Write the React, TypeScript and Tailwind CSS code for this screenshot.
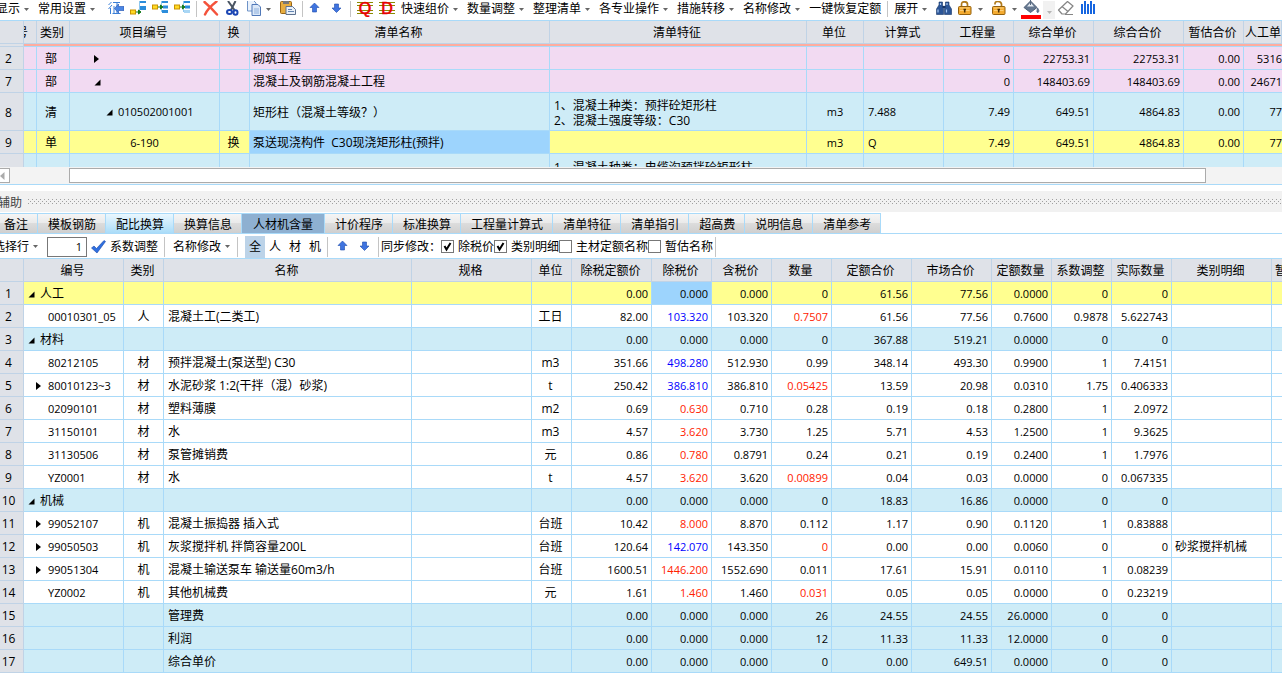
import { useState, type ReactNode } from 'react'

interface BillRow {
  no: string
  kind: string
  tree?: 'open' | 'closed'
  code?: string
  swap?: string
  name?: string
  feature?: string
  unit?: string
  formula?: string
  qty?: string
  price?: string
  total?: string
  estimate?: string
  labour?: string
  tone: 'pink' | 'cyan' | 'yellow'
}

interface ResourceRow {
  tree?: 'open' | 'closed'
  group?: string
  code?: string
  kind?: string
  name?: string
  unit?: string
  values: string[]
  priceColor?: 'blue' | 'red'
  qtyRed?: boolean
  detail?: string
  tone: 'white' | 'cyan' | 'yellow'
}

const tones: Record<string, string> = {
  pink: 'bg-[#f2daf2]',
  cyan: 'bg-[#ceecf7]',
  yellow: 'bg-[#ffff90]',
  white: 'bg-white',
}

const billRows: BillRow[] = [
  { no: '2', kind: '部', tree: 'closed', name: '砌筑工程', qty: '0', price: '22753.31', total: '22753.31', estimate: '0.00', labour: '5316', tone: 'pink' },
  { no: '7', kind: '部', tree: 'open', name: '混凝土及钢筋混凝土工程', qty: '0', price: '148403.69', total: '148403.69', estimate: '0.00', labour: '24671', tone: 'pink' },
  { no: '8', kind: '清', tree: 'open', code: '010502001001', name: '矩形柱（混凝土等级？）', feature: '1、混凝土种类：预拌砼矩形柱\n2、混凝土强度等级：C30', unit: 'm3', formula: '7.488', qty: '7.49', price: '649.51', total: '4864.83', estimate: '0.00', labour: '77', tone: 'cyan' },
  { no: '9', kind: '单', code: '6-190', swap: '换', name: '泵送现浇构件  C30现浇矩形柱(预拌)', unit: 'm3', formula: 'Q', qty: '7.49', price: '649.51', total: '4864.83', estimate: '0.00', labour: '77', tone: 'yellow' },
]

const billHeads = ['类别', '项目编号', '换', '清单名称', '清单特征', '单位', '计算式', '工程量', '综合单价', '综合合价', '暂估合价']

// values: 除税定额价, 除税价, 含税价, 数量, 定额合价, 市场合价, 定额数量, 系数调整, 实际数量
const resourceRows: ResourceRow[] = [
  { tree: 'open', group: '人工', values: ['0.00', '0.000', '0.000', '0', '61.56', '77.56', '0.0000', '0', '0'], tone: 'yellow' },
  { code: '00010301_05', kind: '人', name: '混凝土工(二类工)', unit: '工日', values: ['82.00', '103.320', '103.320', '0.7507', '61.56', '77.56', '0.7600', '0.9878', '5.622743'], priceColor: 'blue', qtyRed: true, tone: 'white' },
  { tree: 'open', group: '材料', values: ['0.00', '0.000', '0.000', '0', '367.88', '519.21', '0.0000', '0', '0'], tone: 'cyan' },
  { code: '80212105', kind: '材', name: '预拌混凝土(泵送型) C30', unit: 'm3', values: ['351.66', '498.280', '512.930', '0.99', '348.14', '493.30', '0.9900', '1', '7.4151'], priceColor: 'blue', tone: 'white' },
  { tree: 'closed', code: '80010123~3', kind: '材', name: '水泥砂浆 1:2(干拌（混）砂浆)', unit: 't', values: ['250.42', '386.810', '386.810', '0.05425', '13.59', '20.98', '0.0310', '1.75', '0.406333'], priceColor: 'blue', qtyRed: true, tone: 'white' },
  { code: '02090101', kind: '材', name: '塑料薄膜', unit: 'm2', values: ['0.69', '0.630', '0.710', '0.28', '0.19', '0.18', '0.2800', '1', '2.0972'], priceColor: 'red', tone: 'white' },
  { code: '31150101', kind: '材', name: '水', unit: 'm3', values: ['4.57', '3.620', '3.730', '1.25', '5.71', '4.53', '1.2500', '1', '9.3625'], priceColor: 'red', tone: 'white' },
  { code: '31130506', kind: '材', name: '泵管摊销费', unit: '元', values: ['0.86', '0.780', '0.8791', '0.24', '0.21', '0.19', '0.2400', '1', '1.7976'], priceColor: 'red', tone: 'white' },
  { code: 'YZ0001', kind: '材', name: '水', unit: 't', values: ['4.57', '3.620', '3.620', '0.00899', '0.04', '0.03', '0.0000', '0', '0.067335'], priceColor: 'red', qtyRed: true, tone: 'white' },
  { tree: 'open', group: '机械', values: ['0.00', '0.000', '0.000', '0', '18.83', '16.86', '0.0000', '0', '0'], tone: 'cyan' },
  { tree: 'closed', code: '99052107', kind: '机', name: '混凝土振捣器 插入式', unit: '台班', values: ['10.42', '8.000', '8.870', '0.112', '1.17', '0.90', '0.1120', '1', '0.83888'], priceColor: 'red', tone: 'white' },
  { tree: 'closed', code: '99050503', kind: '机', name: '灰浆搅拌机 拌筒容量200L', unit: '台班', values: ['120.64', '142.070', '143.350', '0', '0.00', '0.00', '0.0060', '0', '0'], priceColor: 'blue', qtyRed: true, detail: '砂浆搅拌机械', tone: 'white' },
  { tree: 'closed', code: '99051304', kind: '机', name: '混凝土输送泵车 输送量60m3/h', unit: '台班', values: ['1600.51', '1446.200', '1552.690', '0.011', '17.61', '15.91', '0.0110', '1', '0.08239'], priceColor: 'red', tone: 'white' },
  { code: 'YZ0002', kind: '机', name: '其他机械费', unit: '元', values: ['1.61', '1.460', '1.460', '0.031', '0.05', '0.05', '0.0000', '0', '0.23219'], priceColor: 'red', qtyRed: true, tone: 'white' },
  { name: '管理费', values: ['0.00', '0.000', '0.000', '26', '24.55', '24.55', '26.0000', '0', '0'], tone: 'cyan' },
  { name: '利润', values: ['0.00', '0.000', '0.000', '12', '11.33', '11.33', '12.0000', '0', '0'], tone: 'cyan' },
  { name: '综合单价', values: ['0.00', '0.000', '0.000', '0', '0.00', '649.51', '0.0000', '0', '0'], tone: 'cyan' },
]

const resourceHeads = ['编号', '类别', '名称', '规格', '单位', '除税定额价', '除税价', '含税价', '数量', '定额合价', '市场合价', '定额数量', '系数调整', '实际数量', '类别明细']

const tabs = ['备注', '模板钢筋', '配比换算', '换算信息', '人材机含量', '计价程序', '标准换算', '工程量计算式', '清单特征', '清单指引', '超高费', '说明信息', '清单参考']

function Caret({ light = false }: { light?: boolean }) {
  return (
    <svg width="5" height="3" viewBox="0 0 5 3" className="shrink-0">
      <path d="M0 0h5L2.5 3z" fill={light ? '#b5b5b5' : '#666'} />
    </svg>
  )
}

function Sep({ tall = false }: { tall?: boolean }) {
  return <span className={`block w-px shrink-0 bg-[#c4c4c4] ${tall ? 'h-5' : 'h-4'}`} />
}

function MenuButton({ label, children }: { label?: string; children: ReactNode }) {
  return (
    <button aria-label={label} className="flex shrink-0 items-center gap-1 whitespace-nowrap pr-[3px]">
      {children}
      <Caret />
    </button>
  )
}

function IconButton({ label, children }: { label: string; children: ReactNode }) {
  return (
    <button aria-label={label} className="flex h-4 shrink-0 items-center">
      {children}
    </button>
  )
}

function TreeMark({ state }: { state: 'open' | 'closed' }) {
  return state === 'open' ? (
    <svg width="7" height="7" viewBox="0 0 7 7" className="shrink-0">
      <path d="M6.5 0.5v6h-6z" fill="#000" />
    </svg>
  ) : (
    <svg width="5" height="8" viewBox="0 0 5 8" className="shrink-0">
      <path d="M0 0l5 4-5 4z" fill="#000" />
    </svg>
  )
}

function LocateIcon() {
  return (
    <svg width="16" height="16" viewBox="0 0 16 16">
      <path d="M3.500 1L0.500 4M4 4L0.500 8M2.500 7v6M5 1.500h7M9 1.500V12M6 5v7M4.500 12.500h8" fill="none" stroke="#3b7fd6" />
      <path d="M6.500 7.500L10.500 3v2.500H16v4h-5.500V12z" fill="#4a86e4" stroke="#1c4fae" strokeWidth="0.600" />
    </svg>
  )
}

// yellow source box with an arrow into one slot of the stacked blue list
function InsertIcon({ at }: { at: 'bottom' | 'middle' | 'top' }) {
  const y = at === 'bottom' ? 10 : 5
  return (
    <svg width="16" height="16" viewBox="0 0 16 16">
      <path d="M9.500 0v11" stroke="#8cc7ef" />
      <rect x="10" y="0" width="6" height="2" fill="#2c8ddb" />
      {at === 'bottom' && <rect x="10" y="5" width="6" height="4" fill="#2c8ddb" />}
      {at === 'middle' && <path d="M11 4.500h5v3h-5zM10 9h6v3h-6z" fill="#2c8ddb" />}
      {at === 'top' && <path d="M11 4.500h5v3h-5z" fill="#2c8ddb" />}
      {at === 'top' && <path d="M10 9h6v3h-6z" fill="#a9d6f4" />}
      <rect x="0.500" y={y - 1} width="5" height="4" fill="#ffd923" stroke="#c99400" />
      <path d={`M6 ${y + 1}h4M8.500 ${y - 1}l2.500 2-2.500 2z`} fill="#157a1c" stroke="#157a1c" />
    </svg>
  )
}

function DeleteIcon() {
  return (
    <svg width="16" height="16" viewBox="0 0 16 16">
      <path d="M1.500 1C5 4 11 10 14 13.500M13.500 0.500C9 4 4 9 2 13.500" fill="none" stroke="#f4523b" strokeWidth="2.400" strokeLinecap="round" />
    </svg>
  )
}

function CutIcon() {
  return (
    <svg width="16" height="16" viewBox="0 0 16 16">
      <path d="M3 0l6.500 9M10.500 0L6 9" stroke="#4a5563" strokeWidth="2" />
      <ellipse cx="4.500" cy="11" rx="2.500" ry="2" fill="none" stroke="#1b46b4" strokeWidth="2" />
      <ellipse cx="10.500" cy="11.500" rx="2" ry="2.300" fill="none" stroke="#1b46b4" strokeWidth="2" />
    </svg>
  )
}

function CopyIcon() {
  return (
    <svg width="15" height="16" viewBox="0 0 15 16">
      <path d="M0.500-0.500h6l2.500 2.500v8h-8.500z" fill="#eaf2fc" stroke="#6e93c8" />
      <path d="M5 3.500h6l2.500 2.500v8.500H5z" fill="#dbe8f8" stroke="#5078b8" />
      <path d="M7 8h5M7 10h5M7 12h5" stroke="#8fb0dc" />
    </svg>
  )
}

function PasteIcon() {
  return (
    <svg width="16" height="16" viewBox="0 0 16 16">
      <rect x="0.500" y="0.500" width="11" height="12" rx="1" fill="#e8ad3e" stroke="#986415" />
      <rect x="3" y="0" width="6" height="3" fill="#777" />
      <path d="M6 5.500h6.500l3 3V13.500H6z" fill="#e9f0f8" stroke="#5f7290" />
      <path d="M8 8.500h4M8 10.500h6" stroke="#6485b2" />
    </svg>
  )
}

function ArrowIcon({ down = false, width = 16 }: { down?: boolean; width?: number }) {
  return (
    <svg width={width} height="16" viewBox={`0 0 ${width} 16`}>
      <path
        d={down ? 'M3.500 3h4v4h2.500L5.500 11.500 1 7h2.500z' : 'M5.500 2L10 6.500H7.500v4.500h-4V6.500H1z'}
        fill="#3f74e0"
        stroke="#1d4cab"
        strokeWidth="0.600"
      />
    </svg>
  )
}

function LetterIcon({ letter }: { letter: string }) {
  return (
    <svg width="16" height="16" viewBox="0 0 16 16">
      <path d="M0 1.500h16M0 4.500h16M0 9.500h16M0 12.500h16" stroke="#8a8a00" />
      <text x="8" y="13" textAnchor="middle" fontSize="16" fill="#e80000" stroke="#e80000" strokeWidth="0.600" className="font-['Liberation_Sans',sans-serif]">
        {letter}
      </text>
    </svg>
  )
}

function BinocularsIcon() {
  return (
    <svg width="16" height="16" viewBox="0 0 16 16">
      <path d="M3 1h3.500v3l1 2v7.500H0.500V8L3 4zM13 1H9.500v3l-1 2v7.500h7V8L13 4z" fill="#2b5597" stroke="#173566" strokeWidth="0.600" />
      <path d="M2 8.500v3M10.500 8.500v3M4.500 2v2M11 2v2" stroke="#a8c8f2" strokeWidth="1.200" />
      <path d="M6.500 6h3" stroke="#173566" strokeWidth="2" />
    </svg>
  )
}

function LockIcon({ open = false }: { open?: boolean }) {
  return (
    <svg width="16" height="16" viewBox="0 0 16 16">
      <path d={open ? 'M3 3.500V2.500Q3 0.500 6 0.500T9.500 3v3' : 'M3.500 6V3.500Q3.500 0.800 6.500 0.800T9.500 3.500V6'} fill="none" stroke="#b07a1c" strokeWidth="1.700" />
      <rect x="0.500" y="5.500" width="12.500" height="8" rx="1" fill="#f4ab30" stroke="#94600d" />
      <path d="M2 7h9.500M2 9.500h9.500" stroke="#ffd88a" strokeWidth="0.800" />
      <path d="M5.500 8.500h2.500M6.700 8v3.500" stroke="#4b2f04" strokeWidth="1.500" />
    </svg>
  )
}

function FillIcon() {
  return (
    <svg width="20" height="20" viewBox="0 0 20 20">
      <path d="M9.500 1L16 7.500 9.500 12.500 3 7.500z" fill="#64778f" stroke="#506179" />
      <path d="M9.500 2.500L13 6.500H6z" fill="#e6ecf3" />
      <path d="M9.500 0v5" stroke="#57687f" />
      <path d="M16.500 8c1.500 2 1.500 3 1 4s-2 0.500-1.500-1z" fill="#5d7089" stroke="#5d7089" />
      <rect x="0" y="15" width="20" height="4" fill="#f00" />
    </svg>
  )
}

function EraserIcon() {
  return (
    <svg width="18" height="16" viewBox="0 0 18 16">
      <path d="M1.500 9L10.500 0.500l5.500 4.500L8.500 13H5z" fill="#fff" stroke="#858585" strokeWidth="1.200" strokeLinejoin="round" />
      <path d="M5 5.500l6 5M8 13.500h8" stroke="#858585" strokeWidth="1.200" />
    </svg>
  )
}

function BarsIcon() {
  return (
    <svg width="15" height="16" viewBox="0 0 15 16">
      <path d="M1 3v10M4 0v13M7 3v10M10 0v13M13 3v10" stroke="#1565e0" strokeWidth="2" />
    </svg>
  )
}

function MainToolbar() {
  return (
    <div className="flex h-5 items-center gap-1.5 overflow-hidden bg-white pb-[2px] leading-4">
      <div className="-ml-1 mr-1 flex items-center gap-1.5">
        <MenuButton>显示</MenuButton>
        <MenuButton>常用设置</MenuButton>
      </div>
      <IconButton label="定位"><LocateIcon /></IconButton>
      <IconButton label="插入末行"><InsertIcon at="bottom" /></IconButton>
      <IconButton label="插入中间"><InsertIcon at="middle" /></IconButton>
      <IconButton label="插入首行"><InsertIcon at="top" /></IconButton>
      <Sep />
      <IconButton label="删除"><DeleteIcon /></IconButton>
      <IconButton label="剪切"><CutIcon /></IconButton>
      <MenuButton label="复制"><CopyIcon /></MenuButton>
      <IconButton label="粘贴"><PasteIcon /></IconButton>
      <Sep />
      <IconButton label="上移"><ArrowIcon /></IconButton>
      <IconButton label="下移"><ArrowIcon down width={13} /></IconButton>
      <Sep />
      <IconButton label="清单"><LetterIcon letter="Q" /></IconButton>
      <IconButton label="定额"><LetterIcon letter="D" /></IconButton>
      <MenuButton>快速组价</MenuButton>
      <MenuButton>数量调整</MenuButton>
      <MenuButton>整理清单</MenuButton>
      <MenuButton>各专业操作</MenuButton>
      <MenuButton>措施转移</MenuButton>
      <MenuButton>名称修改</MenuButton>
      <button className="shrink-0 whitespace-nowrap">一键恢复定额</button>
      <Sep />
      <MenuButton>展开</MenuButton>
      <IconButton label="查找"><BinocularsIcon /></IconButton>
      <MenuButton label="锁定"><LockIcon /></MenuButton>
      <button aria-label="解锁" className="flex shrink-0 items-center gap-1"><LockIcon open /><Caret /></button>
      <div className="-ml-[2px] flex shrink-0 items-center gap-0.5 self-start">
        <button aria-label="填充颜色"><FillIcon /></button>
        <button aria-label="选择颜色" className="flex h-[18px] w-3 items-center justify-center bg-[#f1f1f1] pt-1"><Caret light /></button>
      </div>
      <div className="-ml-1 flex shrink-0 items-center gap-1.5">
        <IconButton label="清除格式"><EraserIcon /></IconButton>
        <IconButton label="图表"><BarsIcon /></IconButton>
      </div>
    </div>
  )
}

const head = 'border-r border-b border-[#c0d3e6] bg-[#dfe2e8] p-0 pt-[2px] font-normal overflow-hidden whitespace-nowrap'
const cell = 'border-r border-b border-[#a9daf9] p-0 pt-[2px] overflow-hidden whitespace-pre'
const num = 'pr-[3px] text-right text-[11px]'

function BillTable() {
  return (
    <div className="h-[147px] overflow-hidden border-t border-[#a9daf9]">
      <table className="w-full table-fixed border-separate border-spacing-0">
        <colgroup>
          <col className="w-6" />
          <col className="w-[13px]" />
          <col className="w-[33px]" />
          <col className="w-[150px]" />
          <col className="w-[30px]" />
          <col className="w-[300px]" />
          <col className="w-[257px]" />
          <col className="w-[57px]" />
          <col className="w-[80px]" />
          <col className="w-[70px]" />
          <col className="w-[80px]" />
          <col className="w-[90px]" />
          <col className="w-[60px]" />
          <col />
        </colgroup>
        <thead>
          <tr className="h-[23px]">
            <th className={head} />
            <th className={head}><span className="-ml-2 block w-3">号</span></th>
            {billHeads.map((h) => <th key={h} className={`${head} pr-[2px]`}>{h}</th>)}
            <th className={`${head} text-right`}>人工单</th>
          </tr>
          <tr className="h-[3px]">
            <td className="border-r border-b border-[#c0d3e6] bg-[#dfe2e8] p-0" />
            <td colSpan={13} className="border-b border-[#a9daf9] bg-[#ffac9f] p-0" />
          </tr>
        </thead>
        <tbody>
          {billRows.map((r) => (
            <tr key={r.no} className={`${r.feature ? 'h-[38px]' : 'h-[23px]'} ${tones[r.tone]}`}>
              <td className={`${head} pr-1.5 text-center text-xs`}>{r.no}</td>
              <td className={cell} />
              <td className={`${cell} pr-1 text-center`}>{r.kind}</td>
              <td className={cell}>
                {r.tree ? (
                  <span className={`flex items-center gap-[5px] text-[11px] ${r.code ? 'pl-9' : 'pl-6'}`}>
                    <TreeMark state={r.tree} />
                    {r.code}
                  </span>
                ) : (
                  <span className="block text-center text-[11px]">{r.code}</span>
                )}
              </td>
              <td className={`${cell} pr-[2px] text-center`}>{r.swap}</td>
              <td className={`${cell} pl-[3px] ${r.tone === 'yellow' ? 'bg-[#9dd4fd]' : ''}`}>{r.name}</td>
              <td className={`${cell} pl-1 leading-[15px]`}>{r.feature}</td>
              <td className={`${cell} text-center text-[11px]`}>{r.unit}</td>
              <td className={`${cell} pl-1 text-[11px]`}>{r.formula}</td>
              <td className={`${cell} ${num}`}>{r.qty}</td>
              <td className={`${cell} ${num}`}>{r.price}</td>
              <td className={`${cell} ${num}`}>{r.total}</td>
              <td className={`${cell} ${num}`}>{r.estimate}</td>
              <td className="overflow-hidden border-b border-[#a9daf9] p-0 pt-[2px] text-right text-[11px]">{r.labour}</td>
            </tr>
          ))}
          <tr className="h-[38px] bg-[#ceecf7]">
            <td className={head} />
            {[0, 1, 2, 3, 4].map((i) => <td key={i} className={cell} />)}
            <td className={`${cell} pl-1 align-top leading-[15px]`}>
              <span className="block pt-1">1、混凝土种类：电缆沟预拌砼矩形柱</span>
            </td>
            {[0, 1, 2, 3, 4, 5].map((i) => <td key={i} className={cell} />)}
            <td className="p-0" />
          </tr>
        </tbody>
      </table>
    </div>
  )
}

function ScrollTrack() {
  return (
    <div className="flex h-[18px] items-center border-b border-[#a9daf9] bg-[#f3f3f3]">
      <button aria-label="向左滚动" className="flex h-[15px] w-[10px] items-center border border-l-0 border-[#ababab] bg-white">
        <svg width="5" height="8" viewBox="0 0 5 8"><path d="M4.500 0v8L0 4z" fill="#ababab" /></svg>
      </button>
      <div className="ml-[59px] mr-[76px] h-[15px] flex-1 border border-[#ababab] bg-white" />
    </div>
  )
}

function PanelTitle() {
  return (
    <div className="mt-1.5 flex h-[21px] items-center gap-1.5 bg-[#f1f1f1] text-[#444]">
      <span className="-ml-[2px] shrink-0 pt-[2px]">辅助</span>
      <svg className="h-[5px] min-w-0 flex-1">
        <defs>
          <pattern id="grip" width="4" height="4" patternUnits="userSpaceOnUse">
            <rect width="1" height="1" fill="#a0a0a0" />
            <rect x="2" y="2" width="1" height="1" fill="#a0a0a0" />
          </pattern>
        </defs>
        <rect width="100%" height="5" fill="url(#grip)" />
      </svg>
    </div>
  )
}

function TabBar() {
  const [active, setActive] = useState('人材机含量')

  const look = (t: string) => {
    if (t === active) return 'bg-[#8eb0d1] px-[11px]'
    if (t === '配比换算') return 'bg-linear-to-b from-[#eaf7fe] to-[#aadcf8] pl-[10px] pr-[9px]'
    return 'bg-[linear-gradient(#f5f5f5,#e9e9e9_50%,#dcdcdc_50%,#cfcfcf)] pl-[10px] pr-[9px]'
  }

  return (
    <div role="tablist" className="mt-px flex h-[21px] border-b border-[#a9daf9]">
      <div className="-ml-[6px] flex">
        {tabs.map((t) => (
          <button
            key={t}
            role="tab"
            aria-selected={t === active}
            onClick={() => setActive(t)}
            className={`whitespace-nowrap border-t border-r border-[#a9daf9] pt-[2px] ${look(t)}`}
          >
            {t}
          </button>
        ))}
      </div>
    </div>
  )
}

function SyncCheck({ label, checked = false }: { label: string; checked?: boolean }) {
  return (
    <label className="relative flex shrink-0 items-center gap-1 whitespace-nowrap">
      <input type="checkbox" defaultChecked={checked} className="peer size-[13px] shrink-0 appearance-none border border-[#777] bg-white" />
      <svg viewBox="0 0 13 13" className="pointer-events-none invisible absolute left-0 size-[13px] peer-checked:visible">
        <path d="M3.500 6l2 3.500L9.500 3" fill="none" stroke="#000" strokeWidth="2" />
      </svg>
      {label}
    </label>
  )
}

function ResourceToolbar() {
  return (
    <div className="flex h-6 items-center pt-px leading-4">
      <div className="-ml-[7px] flex items-center gap-1.5">
        <MenuButton>选择行</MenuButton>
        <input aria-label="选择行数" defaultValue="1" className="h-5 w-10 border border-[#777] bg-white pr-1 text-right text-[11px]" />
      </div>
      <button className="ml-1 flex items-center gap-1 whitespace-nowrap">
        <svg width="15" height="14" viewBox="0 0 15 14">
          <path d="M0.500 8L3 6l2.500 2.500L13 0.500l1.500 1L6 13z" fill="#2f6fe0" stroke="#1846a8" strokeWidth="0.600" />
        </svg>
        系数调整
      </button>
      <div className="ml-1.5 flex items-center gap-2">
        <Sep tall />
        <MenuButton>名称修改</MenuButton>
      </div>
      <div className="ml-1 flex items-center">
        <Sep tall />
        <button className="ml-[7px] h-[22px] w-5 bg-[#bcd3e8]">全</button>
        <button className="w-5">人</button>
        <button className="w-5">材</button>
        <button className="w-5">机</button>
      </div>
      <div className="ml-[2px] flex items-center gap-[9px]">
        <Sep tall />
        <div className="flex gap-1.5">
          <IconButton label="上移"><ArrowIcon /></IconButton>
          <IconButton label="下移"><ArrowIcon down width={13} /></IconButton>
        </div>
      </div>
      <div className="ml-1.5 flex items-center gap-[2px]">
        <Sep tall />
        <span className="w-[60px] whitespace-nowrap">同步修改：</span>
      </div>
      <SyncCheck label="除税价" checked />
      <SyncCheck label="类别明细" checked />
      <SyncCheck label="主材定额名称" />
      <SyncCheck label="暂估名称" />
      <div className="ml-[2px]"><Sep tall /></div>
    </div>
  )
}

function CodeCell({ row }: { row: ResourceRow }) {
  if (row.group) {
    return (
      <span className="flex items-center gap-[5px] pl-1">
        <TreeMark state="open" />
        {row.group}
      </span>
    )
  }
  if (row.tree) {
    return (
      <span className="flex items-center gap-[7px] pl-3 text-[11px]">
        <TreeMark state={row.tree} />
        {row.code}
      </span>
    )
  }
  return <span className="pl-6 text-[11px]">{row.code}</span>
}

function ResourceTable() {
  const valueColor = (row: ResourceRow, i: number) => {
    if (i === 1 && row.priceColor === 'blue') return 'text-[#0000ff]'
    if (i === 1 && row.priceColor === 'red') return 'text-[#ff2200]'
    if (i === 3 && row.qtyRed) return 'text-[#ff2200]'
    return ''
  }

  return (
    <table className="w-full table-fixed border-separate border-spacing-0 border-t border-[#a9daf9]">
      <colgroup>
        <col className="w-6" />
        <col className="w-[100px]" />
        <col className="w-10" />
        <col className="w-[248px]" />
        <col className="w-[120px]" />
        <col className="w-10" />
        <col className="w-20" />
        <col className="w-[60px]" />
        <col className="w-[60px]" />
        <col className="w-[60px]" />
        <col className="w-20" />
        <col className="w-20" />
        <col className="w-[60px]" />
        <col className="w-[60px]" />
        <col className="w-[60px]" />
        <col className="w-[100px]" />
        <col />
      </colgroup>
      <thead>
        <tr className="h-[23px]">
          <th className={head} />
          {resourceHeads.map((h) => <th key={h} className={`${head} pr-[2px]`}>{h}</th>)}
          <th className={`${head} border-r-0 pl-[3px] text-left`}>暂</th>
        </tr>
      </thead>
      <tbody>
        {resourceRows.map((r, n) => (
          <tr key={n} className={`h-[23px] ${tones[r.tone]}`}>
            <td className={`${head} pr-1.5 text-center text-xs`}>{n + 1}</td>
            <td className={cell}><CodeCell row={r} /></td>
            <td className={`${cell} text-center`}>{r.kind}</td>
            <td className={`${cell} pl-1`}>{r.name}</td>
            <td className={cell} />
            <td className={`${cell} pr-[2px] text-center`}>{r.unit}</td>
            {r.values.map((v, i) => (
              <td key={i} className={`${cell} ${num} ${valueColor(r, i)} ${n === 0 && i === 1 ? 'bg-[#9dd4fd]' : ''}`}>
                {v}
              </td>
            ))}
            <td className={`${cell} pl-[3px]`}>{r.detail}</td>
            <td className="border-b border-[#a9daf9] p-0" />
          </tr>
        ))}
      </tbody>
    </table>
  )
}

export default function App() {
  return (
    <div className="min-h-screen overflow-hidden bg-white font-['Open_Sans','Noto_Sans_CJK_SC',sans-serif] text-xs text-black">
      <MainToolbar />
      <BillTable />
      <ScrollTrack />
      <PanelTitle />
      <TabBar />
      <ResourceToolbar />
      <ResourceTable />
    </div>
  )
}
